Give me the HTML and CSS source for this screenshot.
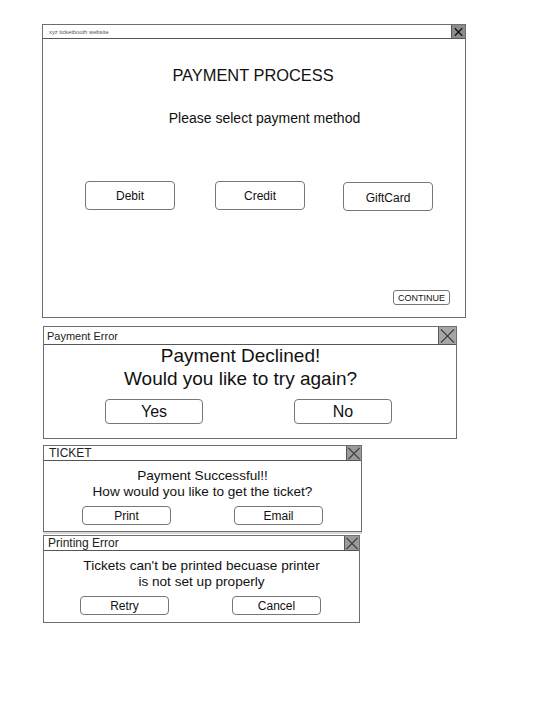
FILE: index.html
```html
<!DOCTYPE html>
<html>
<head>
<meta charset="utf-8">
<link rel="stylesheet" href="styles.css">
</head>
<body>
<div class="stack">
  <section class="win win-main">
    <header class="bar bar-main">
      <span class="bar-title tiny">xyz ticketbooth website</span>
      <span class="close close-main"><svg viewBox="0 0 14 14" width="14" height="14"><path d="M3 3L11 11M11 3L3 11" stroke="#111" stroke-width="1.3"/></svg></span>
    </header>
    <div class="main-body">
      <h1 class="main-heading">PAYMENT PROCESS</h1>
      <p class="main-sub">Please select payment method</p>
      <div class="method-row">
        <button class="btn btn-method">Debit</button>
        <button class="btn btn-method">Credit</button>
        <button class="btn btn-method btn-gift">GiftCard</button>
      </div>
      <div class="continue-row">
        <button class="btn btn-continue">CONTINUE</button>
      </div>
    </div>
  </section>

  <section class="win win-error">
    <header class="bar bar-error">
      <span class="bar-title title-error">Payment Error</span>
      <span class="close close-error"><svg viewBox="0 0 18 18" width="18" height="18"><path d="M2 2L16 16M16 2L2 16" stroke="#333" stroke-width="1.2"/></svg></span>
    </header>
    <div class="error-body">
      <p class="error-text">Payment Declined!<br>Would you like to try again?</p>
      <div class="error-row">
        <button class="btn btn-big">Yes</button>
        <button class="btn btn-big">No</button>
      </div>
    </div>
  </section>

  <section class="win win-ticket">
    <header class="bar bar-small">
      <span class="bar-title title-small">TICKET</span>
      <span class="close close-small"><svg viewBox="0 0 15 15" width="15" height="15"><path d="M1.5 1.5L13.5 13.5M13.5 1.5L1.5 13.5" stroke="#333" stroke-width="1.1"/></svg></span>
    </header>
    <div class="small-body">
      <p class="small-text">Payment Successful!!<br>How would you like to get the ticket?</p>
      <div class="small-row ticket-row">
        <button class="btn btn-small">Print</button>
        <button class="btn btn-small">Email</button>
      </div>
    </div>
  </section>

  <section class="win win-print">
    <header class="bar bar-small">
      <span class="bar-title title-small title-print">Printing Error</span>
      <span class="close close-small"><svg viewBox="0 0 15 15" width="15" height="15"><path d="M1.5 1.5L13.5 13.5M13.5 1.5L1.5 13.5" stroke="#333" stroke-width="1.1"/></svg></span>
    </header>
    <div class="small-body">
      <p class="small-text">Tickets can't be printed becuase printer<br>is not set up properly</p>
      <div class="small-row print-row">
        <button class="btn btn-small">Retry</button>
        <button class="btn btn-small">Cancel</button>
      </div>
    </div>
  </section>
</div>
</body>
</html>
```

FILE: styles.css
```css
* { box-sizing: border-box; }
html, body { margin: 0; padding: 0; background: #fff; }
body {
  font-family: "Liberation Sans", Arial, sans-serif;
  color: #111;
}
p, h1 { margin: 0; font-weight: normal; }

.stack {
  display: flex;
  flex-direction: column;
  align-items: flex-start;
  padding: 24px 0 0 42px;
}

.win {
  border: 1px solid #6e6e6e;
  background: #fff;
  display: flex;
  flex-direction: column;
}

.bar {
  display: flex;
  align-items: center;
  justify-content: space-between;
  border-bottom: 1px solid #555;
}
.bar-title { padding-left: 5px; color: #222; }
.close {
  display: flex;
  align-self: stretch;
  background: #9a9a9a;
  border-left: 1px solid #555;
}
.close svg { display: block; }

/* main window */
.win-main { width: 424px; height: 294px; }
.bar-main { height: 14px; }
.tiny { font-size: 5.8px; color: #555; padding-left: 6px; }
.close-main { background: #8c8c8c; width: 14px; }
.main-body {
  flex: 1;
  display: flex;
  flex-direction: column;
  align-items: stretch;
}
.main-heading {
  font-size: 16.4px;
  line-height: 20px;
  text-align: center;
  margin-top: 26px;
  padding-right: 2px;
}
.main-sub {
  font-size: 14px;
  line-height: 18px;
  text-align: center;
  margin-top: 24px;
  padding-left: 21px;
}
.method-row {
  display: flex;
  gap: 40px;
  padding-left: 42px;
  margin-top: 54px;
}
.btn {
  font-family: "Liberation Sans", Arial, sans-serif;
  background: #fff;
  color: #111;
  border: 1px solid #777;
  border-radius: 4px;
  padding: 0;
  display: flex;
  align-items: center;
  justify-content: center;
}
.btn-method { width: 90px; height: 29px; font-size: 12px; }
.btn-gift { margin-top: 1px; padding-top: 3px; margin-left: -2px; }
.continue-row {
  margin-top: auto;
  display: flex;
  justify-content: flex-end;
  padding: 0 15px 12px 0;
}
.btn-continue {
  width: 57px;
  height: 15px;
  font-size: 9px;
  border-radius: 3px;
}

/* payment error */
.win-error { width: 414px; height: 113px; margin-top: 8px; margin-left: 1px; }
.bar-error { height: 18px; }
.title-error { font-size: 11px; padding-left: 3px; }
.close-error { width: 18px; background: #a6a6a6; }
.error-body { display: flex; flex-direction: column; }
.error-text {
  font-size: 19px;
  line-height: 23px;
  text-align: center;
  padding-right: 19px;
  margin-top: -1px;
}
.error-row {
  display: flex;
  gap: 91px;
  padding-left: 61px;
  margin-top: 9px;
}
.btn-big { width: 98px; height: 25px; font-size: 16px; }

/* small dialogs */
.win-ticket { width: 319px; height: 87px; margin-top: 6px; margin-left: 1px; box-shadow: 0 2px 0 #d8d8d8; }
.win-print { width: 317px; height: 88px; margin-top: 3px; margin-left: 1px; }
.bar-small { height: 15px; }
.title-small { font-size: 12px; padding-left: 5px; }
.title-print { padding-left: 4px; }
.close-small { width: 15px; background: #9a9a9a; }
.small-body { display: flex; flex-direction: column; padding-top: 7px; }
.small-text {
  font-size: 13.6px;
  line-height: 16px;
  text-align: center;
}
.small-row { display: flex; gap: 63px; margin-top: 6px; }
.ticket-row { padding-left: 38px; }
.print-row { padding-left: 36px; }
.btn-small { width: 89px; height: 19px; font-size: 12px; }
```
